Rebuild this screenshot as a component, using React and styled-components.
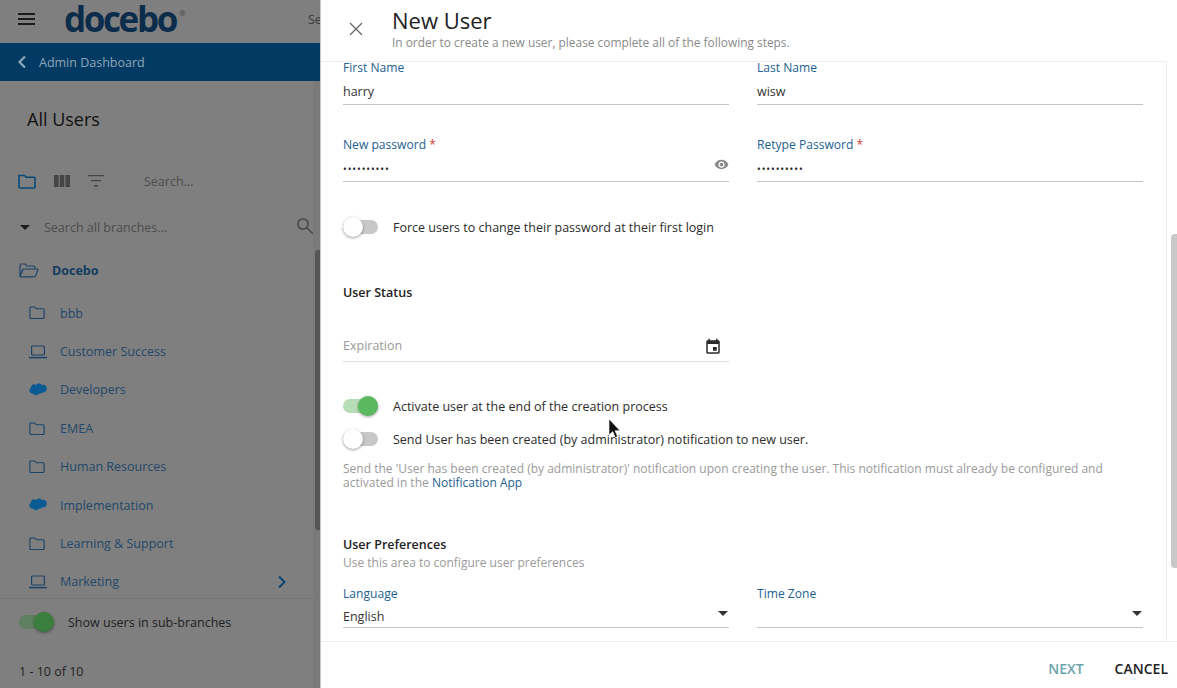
import styled, { createGlobalStyle } from "styled-components";

const GlobalStyle = createGlobalStyle`
  html, body {
    margin: 0;
    padding: 0;
    height: 100%;
    overflow: hidden;
    background: #fff;
  }
  * {
    box-sizing: border-box;
  }
  body {
    font-family: "Open Sans", "Liberation Sans", sans-serif;
    color: #333;
  }
`;

const branches = [
  { name: "bbb", icon: "folder" },
  { name: "Customer Success", icon: "laptop" },
  { name: "Developers", icon: "cloud" },
  { name: "EMEA", icon: "folder" },
  { name: "Human Resources", icon: "folder" },
  { name: "Implementation", icon: "cloud" },
  { name: "Learning & Support", icon: "folder" },
  { name: "Marketing", icon: "laptop", more: true },
];

const FolderIcon = () => (
  <svg width="16" height="13.500" viewBox="0 0 18 15" fill="none" stroke="#1d4468" strokeWidth="1.300">
    <path d="M1 2.200C1 1.500 1.500 1 2.200 1h4.200l1.800 2h7.600c.7 0 1.200.5 1.200 1.200v8.600c0 .7-.5 1.200-1.200 1.200H2.200C1.500 14 1 13.500 1 12.800z" />
  </svg>
);

const LaptopIcon = () => (
  <svg width="18" height="14" viewBox="0 0 18 14" fill="none" stroke="#1d4468" strokeWidth="1.200">
    <rect x="2.600" y="1" width="12.800" height="9" rx="1" />
    <path d="M0 12.600h18" strokeWidth="1.500" />
  </svg>
);

const CloudIcon = () => (
  <svg width="18" height="14" viewBox="0 0 18 14" fill="#0a5a94">
    <path d="M7.200 2.200C8 .9 9.200.2 10.600.5c1 .2 1.700.8 2.200 1.500 2.600-.6 5 .9 5 3.700 0 2.700-2.300 4.300-4.800 3.800-.7 1.100-2.200 1.500-3.300.9-.6 1.500-2.500 2.300-3.900 1.500-.6-.3-1-.7-1.200-1.200C2.700 11 .3 9.700.3 7.600c0-1.300.7-2.300 1.700-2.900C1.800 2.600 3.600.9 5.300 1.200c.8.100 1.400.5 1.900 1z" />
  </svg>
);

const branchIcons = { folder: FolderIcon, laptop: LaptopIcon, cloud: CloudIcon };

const App = () => {
  return (
    <Page>
      <GlobalStyle />
      <Backdrop>
        <TopBar>
          <Burger>
            <i />
            <i />
            <i />
          </Burger>
          <Logo>
            docebo<sup>®</sup>
          </Logo>
          <TopSearch>Se</TopSearch>
        </TopBar>
        <BackBar>
          <svg width="10" height="14" viewBox="0 0 10 14" fill="none" stroke="#8fa6b8" strokeWidth="2.200">
            <path d="M8 1.500 2.500 7 8 12.500" />
          </svg>
          <span>Admin Dashboard</span>
        </BackBar>
        <PageTitle>All Users</PageTitle>
        <Toolbar>
          <ToolIcons>
            <svg width="18" height="15" viewBox="0 0 18 15" fill="none" stroke="#0b4a78" strokeWidth="1.600">
              <path d="M1 1.500h5.500l1.500 1.700h8.200c.4 0 .8.400.8.800v9.200c0 .4-.4.800-.8.800H1.800c-.4 0-.8-.4-.8-.8z" />
            </svg>
            <svg width="16" height="12" viewBox="0 0 16 12" fill="#454545">
              <path d="M0 0h4.600v12H0zM5.700 0h4.600v12H5.700zM11.400 0H16v12h-4.600z" />
            </svg>
            <svg width="16" height="12" viewBox="0 0 16 12" fill="#454545">
              <path d="M0 0h16v1.300H0zM3 5h10v1.300H3zM6 10h4v1.500H6z" />
            </svg>
          </ToolIcons>
          <ToolSearch>Search...</ToolSearch>
        </Toolbar>
        <BranchSearch>
          <Caret $color="#1c1c1c" />
          <BranchSearchText>Search all branches...</BranchSearchText>
          <svg width="18" height="18" viewBox="0 0 18 18" fill="none" stroke="#4a4a4a" strokeWidth="1.600">
            <circle cx="7" cy="7" r="5.200" />
            <path d="m11 11 6 6" />
          </svg>
        </BranchSearch>
        <RootBranch>
          <svg width="20" height="15" viewBox="0 0 20 15" fill="none" stroke="#1d4468" strokeWidth="1.200">
            <path d="M1 13V2.200C1 1.500 1.500 1 2.200 1h3.900l1.800 2h7c.700 0 1.100.500 1.100 1.100V6M1 13.300 4 6.400c.2-.3.500-.4.800-.4h13.400c.5 0 .9.500.7 1l-2.400 6.100c-.2.500-.5.700-1 .7H1.800c-.5 0-.8-.2-.8-.5z" />
          </svg>
          <span>Docebo</span>
        </RootBranch>
        <BranchList>
          {branches.map((branch) => {
            const BranchIcon = branchIcons[branch.icon];
            return (
              <BranchRow key={branch.name}>
                <BranchIconBox>
                  <BranchIcon />
                </BranchIconBox>
                <BranchName>{branch.name}</BranchName>
                {branch.more && (
                  <svg width="10" height="14" viewBox="0 0 10 14" fill="none" stroke="#0b4470" strokeWidth="2">
                    <path d="M2 1.500 7.500 7 2 12.500" />
                  </svg>
                )}
              </BranchRow>
            );
          })}
          <SideScrollbar />
        </BranchList>
        <SubBranches>
          <Toggle $on $dim />
          <span>Show users in sub-branches</span>
        </SubBranches>
        <Pager>1 - 10 of 10</Pager>
      </Backdrop>

      <Dialog>
        <DialogHeader>
          <CloseButton>
            <svg width="14" height="14" viewBox="0 0 14 14" fill="none" stroke="#666" strokeWidth="1.300">
              <path d="M1 1l12 12M13 1 1 13" />
            </svg>
          </CloseButton>
          <div>
            <DialogTitle>New User</DialogTitle>
            <DialogHint>In order to create a new user, please complete all of the following steps.</DialogHint>
          </div>
        </DialogHeader>

        <DialogBody>
          <FieldRow>
            <Field>
              <FieldLabel>First Name</FieldLabel>
              <FieldValue>harry</FieldValue>
            </Field>
            <Field>
              <FieldLabel>Last Name</FieldLabel>
              <FieldValue>wisw</FieldValue>
            </Field>
          </FieldRow>
          <FieldRow $top={34}>
            <Field>
              <FieldLabel>
                New password <Required>*</Required>
              </FieldLabel>
              <FieldValue>
                <Dots>••••••••••</Dots>
                <svg width="15" height="15" viewBox="0 0 24 24" fill="#8a8a8a">
                  <path d="M12 4.500C7 4.500 2.730 7.610 1 12c1.730 4.390 6 7.500 11 7.500s9.270-3.110 11-7.500c-1.730-4.390-6-7.500-11-7.500zM12 17c-2.760 0-5-2.240-5-5s2.240-5 5-5 5 2.240 5 5-2.240 5-5 5zm0-8c-1.660 0-3 1.340-3 3s1.340 3 3 3 3-1.340 3-3-1.340-3-3-3z" />
                </svg>
              </FieldValue>
            </Field>
            <Field>
              <FieldLabel>
                Retype Password <Required>*</Required>
              </FieldLabel>
              <FieldValue>
                <Dots>••••••••••</Dots>
              </FieldValue>
            </Field>
          </FieldRow>

          <SwitchRow $top={35}>
            <Toggle />
            <span>Force users to change their password at their first login</span>
          </SwitchRow>

          <SectionTitle $top={47}>User Status</SectionTitle>

          <ExpirationField>
            <span>Expiration</span>
            <svg width="18" height="18" viewBox="0 0 24 24" fill="#2b2b2b">
              <path d="M17 12h-5v5h5v-5zM16 1v2H8V1H6v2H5c-1.110 0-1.990.9-1.990 2L3 19c0 1.100.89 2 2 2h14c1.100 0 2-.9 2-2V5c0-1.100-.9-2-2-2h-1V1h-2zm3 18H5V8h14v11z" />
            </svg>
          </ExpirationField>

          <SwitchRow $top={34}>
            <Toggle $on />
            <span>Activate user at the end of the creation process</span>
          </SwitchRow>
          <SwitchRow $top={13}>
            <Toggle />
            <span>Send User has been created (by administrator) notification to new user.</span>
          </SwitchRow>
          <HelpText>
            Send the 'User has been created (by administrator)' notification upon creating the user. This notification must already be configured and activated in the{" "}
            <HelpLink>Notification App</HelpLink>
          </HelpText>

          <SectionTitle $top={46}>User Preferences</SectionTitle>
          <SectionHint>Use this area to configure user preferences</SectionHint>
          <FieldRow $top={17}>
            <Field>
              <FieldLabel>Language</FieldLabel>
              <SelectValue>
                <span>English</span>
                <Caret $color="#333" />
              </SelectValue>
            </Field>
            <Field>
              <FieldLabel>Time Zone</FieldLabel>
              <SelectValue>
                <span />
                <Caret $color="#333" />
              </SelectValue>
            </Field>
          </FieldRow>
          <DialogScrollbar />
        </DialogBody>

        <DialogFooter>
          <FooterButton $disabled>NEXT</FooterButton>
          <FooterButton>CANCEL</FooterButton>
        </DialogFooter>

        <MouseCursor width="12" height="20" viewBox="0 0 12 20">
          <path d="M0 0v16l3.700-3.400 2.500 6 2.400-1-2.500-5.900H11z" fill="#111" stroke="#fff" strokeWidth=".6" />
        </MouseCursor>
      </Dialog>
    </Page>
  );
};

export default App;

const Page = styled.div`
  display: flex;
  width: 1177px;
  height: 688px;
  overflow: hidden;
`;

const Backdrop = styled.aside`
  position: relative;
  display: flex;
  flex-direction: column;
  flex: 0 0 320px;
  width: 320px;
  height: 688px;
  overflow: hidden;
  background: #7f7f7f;

  &::after {
    content: "";
    position: absolute;
    top: 81px;
    right: 0;
    bottom: 0;
    width: 7px;
    background: #7a7a7a;
  }
`;

const TopBar = styled.header`
  display: flex;
  align-items: center;
  height: 43px;
  flex: none;
  padding: 0 0 5px 18px;
  white-space: nowrap;
`;

const Burger = styled.div`
  display: flex;
  flex-direction: column;
  flex: none;
  gap: 3px;
  width: 17px;

  i {
    display: block;
    height: 2px;
    background: #1c1c1c;
  }
`;

const Logo = styled.div`
  flex: none;
  margin: 0 auto 0 29px;
  font-size: 35px;
  font-weight: 700;
  line-height: 38px;
  letter-spacing: -2.400px;
  color: #0b2c4a;

  sup {
    font-size: 8px;
    font-weight: 400;
    letter-spacing: 0;
    margin-left: 3px;
    vertical-align: 16px;
    line-height: 0;
    color: #444;
  }
`;

const TopSearch = styled.span`
  width: 12px;
  font-size: 12.500px;
  color: #3c3c3c;
`;

const BackBar = styled.nav`
  display: flex;
  align-items: center;
  gap: 12px;
  height: 38px;
  flex: none;
  padding-left: 17px;
  background: #023a63;
  font-size: 12.500px;
  color: #8fa6b8;
`;

const PageTitle = styled.h1`
  flex: none;
  margin: 26px 0 0 27px;
  font-size: 18px;
  font-weight: 400;
  line-height: 25px;
  color: #111;
`;

const Toolbar = styled.div`
  display: flex;
  align-items: center;
  flex: none;
  height: 20px;
  margin-top: 39px;
  padding-left: 18px;
`;

const ToolIcons = styled.div`
  display: flex;
  align-items: center;
  gap: 18px;
`;

const ToolSearch = styled.span`
  margin-left: 40px;
  font-size: 12.500px;
  color: #4d4d4d;
`;

const BranchSearch = styled.div`
  display: flex;
  align-items: center;
  flex: none;
  height: 20px;
  margin-top: 26px;
  padding: 0 6px 0 20px;

  svg {
    margin-top: -3px;
  }
`;

const BranchSearchText = styled.span`
  flex: 1;
  margin-left: 14px;
  font-size: 12.500px;
  color: #4d4d4d;
`;

const Caret = styled.i`
  display: block;
  flex: none;
  width: 0;
  height: 0;
  border-left: 5px solid transparent;
  border-right: 5px solid transparent;
  border-top: 5px solid ${(props) => props.$color};
`;

const RootBranch = styled.div`
  display: flex;
  align-items: center;
  flex: none;
  gap: 13px;
  height: 20px;
  margin-top: 23px;
  padding-left: 19px;
  font-size: 12.500px;
  font-weight: 700;
  color: #133c5f;
`;

const BranchList = styled.div`
  position: relative;
  display: flex;
  flex-direction: column;
  flex: 1 1 0;
  min-height: 0;
  margin-top: 14px;
`;

const BranchRow = styled.div`
  display: flex;
  align-items: center;
  flex: none;
  height: 38.400px;
  padding: 0 33px 0 29px;
  font-size: 12.500px;
  color: #24486a;
`;

const BranchIconBox = styled.span`
  display: flex;
  align-items: center;
  width: 31px;
`;

const BranchName = styled.span`
  flex: 1;
`;

const SideScrollbar = styled.div`
  position: absolute;
  z-index: 1;
  top: -44px;
  right: 0;
  width: 5px;
  height: 280px;
  border-radius: 3px 0 0 3px;
  background: #555;
`;

const SubBranches = styled.div`
  position: relative;
  display: flex;
  align-items: center;
  gap: 14px;
  flex: none;
  height: 48px;
  padding: 0 0 1px 19px;
  border-top: 1px solid #757575;
  background: #7f7f7f;
  font-size: 12.500px;
  color: #222;
`;

const Pager = styled.div`
  flex: none;
  height: 42px;
  padding: 17px 0 0 19px;
  font-size: 12.500px;
  line-height: 18px;
  color: #222;
`;

const Toggle = styled.span`
  position: relative;
  display: block;
  flex: none;
  width: 35px;
  height: 14px;
  border-radius: 7px;
  background: ${(props) => (props.$dim ? "#5e7f60" : props.$on ? "#b6deb7" : "#c8c8c8")};

  &::after {
    content: "";
    position: absolute;
    top: -3px;
    left: ${(props) => (props.$on ? "15px" : "0")};
    width: 20px;
    height: 20px;
    border-radius: 50%;
    background: ${(props) => (props.$dim ? "#3b7f3e" : props.$on ? "#5cb85f" : "#fff")};
    box-shadow: 0 1px 3px rgba(0, 0, 0, 0.4);
  }
`;

const Dialog = styled.main`
  position: relative;
  display: flex;
  flex-direction: column;
  flex: 1;
  height: 688px;
  border-left: 1px solid #c8c8c8;
  background: #fff;
`;

const DialogHeader = styled.header`
  display: flex;
  align-items: flex-start;
  flex: none;
  height: 62px;
  margin-right: 10px;
  padding-top: 7px;
  border-bottom: 1px solid #eee;
`;

const CloseButton = styled.div`
  display: flex;
  width: 71px;
  padding: 15px 0 0 28px;
`;

const DialogTitle = styled.h2`
  margin: 0;
  font-size: 22px;
  font-weight: 400;
  line-height: 26px;
  color: #222;
`;

const DialogHint = styled.p`
  margin: 1px 0 0;
  font-size: 11.900px;
  line-height: 16px;
  color: #8a8a8a;
`;

const DialogBody = styled.div`
  position: relative;
  flex: none;
  height: 579px;
  margin-right: 10px;
  padding: 0 22px;
  border-right: 1px solid #eee;
`;

const FieldRow = styled.div`
  display: flex;
  gap: 28px;
  width: 800px;
  margin-top: ${(props) => props.$top || 0}px;
`;

const Field = styled.div`
  flex: 0 0 386px;
`;

const FieldLabel = styled.div`
  font-size: 12.100px;
  font-weight: 500;
  line-height: 12px;
  color: #1d5f90;
`;

const Required = styled.span`
  color: #d0423a;
`;

const FieldValue = styled.div`
  display: flex;
  align-items: center;
  justify-content: space-between;
  height: 31px;
  padding-top: 4px;
  border-bottom: 1px solid #c4c4c4;
  font-size: 12.500px;
  color: #333;

  svg {
    margin-top: -8px;
  }
`;

const Dots = styled.span`
  margin-top: 2px;
  font-size: 10px;
  letter-spacing: 0.900px;
  color: #222;
`;

const SwitchRow = styled.div`
  display: flex;
  align-items: center;
  gap: 15px;
  height: 20px;
  margin-top: ${(props) => props.$top}px;
  font-size: 12.500px;
  color: #2b2b2b;
`;

const SectionTitle = styled.h3`
  margin: ${(props) => props.$top}px 0 0;
  font-size: 12.500px;
  font-weight: 600;
  line-height: 18px;
  color: #222;
`;

const SectionHint = styled.p`
  margin: 1px 0 0;
  font-size: 12px;
  line-height: 16px;
  color: #999;
`;

const ExpirationField = styled.div`
  display: flex;
  align-items: center;
  justify-content: space-between;
  width: 386px;
  height: 34px;
  margin-top: 26px;
  padding: 2px 7px 0 0;
  border-bottom: 1px solid #ddd;
  font-size: 12.500px;
  color: #999;

  svg {
    margin-top: 2px;
  }
`;

const HelpText = styled.p`
  width: 790px;
  margin: 13px 0 0;
  font-size: 12px;
  line-height: 14px;
  color: #9a9a9a;
`;

const HelpLink = styled.a`
  color: #1d5f90;
`;

const SelectValue = styled(FieldValue)`
  height: 28px;
  padding: 6px 1px 0 0;

  i {
    margin-top: -6px;
  }
`;

const DialogScrollbar = styled.div`
  position: absolute;
  top: 172px;
  right: -11px;
  width: 6px;
  height: 334px;
  border-radius: 4px 0 0 4px;
  background: #c8c8c8;
`;

const DialogFooter = styled.footer`
  display: flex;
  align-items: center;
  justify-content: flex-end;
  gap: 31px;
  flex: 1;
  padding: 6px 9px 0 0;
  border-top: 1px solid #eee;
`;

const FooterButton = styled.span`
  font-size: 14px;
  font-weight: 600;
  color: ${(props) => (props.$disabled ? "#6aa5ae" : "#222")};
`;

const MouseCursor = styled.svg`
  position: absolute;
  top: 419px;
  left: 288px;
`;
